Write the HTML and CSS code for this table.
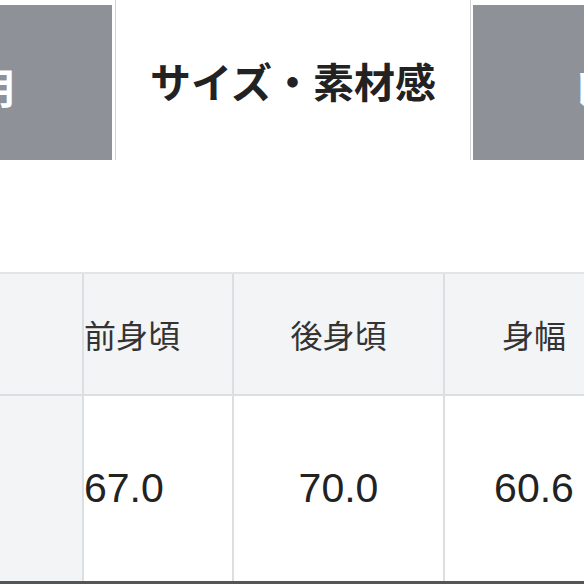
FILE: index.html
```html
<!DOCTYPE html>
<html lang="ja">
<head>
<meta charset="utf-8">
<link rel="stylesheet" href="styles.css">
</head>
<body>
<div class="page">
  <div class="tabs">
    <div class="tab tab-off tab-left">商品説明</div>
    <div class="tab tab-on">サイズ・素材感</div>
    <div class="tab tab-off tab-right">レビュー</div>
  </div>
  <div class="size-table">
    <div class="cell head first"></div>
    <div class="cell head left">前身頃</div>
    <div class="cell head">後身頃</div>
    <div class="cell head">身幅</div>
    <div class="cell data first"></div>
    <div class="cell data left num">67.0</div>
    <div class="cell data num">70.0</div>
    <div class="cell data num">60.6</div>
  </div>
</div>
</body>
</html>
```
FILE: styles.css
```css
html, body {
  margin: 0;
  padding: 0;
  background: #ffffff;
}
.page {
  width: 584px;
  height: 584px;
  overflow: hidden;
  font-family: "Noto Sans CJK JP", "Noto Sans", sans-serif;
}
.tabs {
  display: flex;
  align-items: flex-end;
  height: 160px;
  width: 1200px;
  margin-left: -248px;
}
.tab {
  flex: 0 0 auto;
  display: flex;
  align-items: center;
  justify-content: center;
  font-weight: 700;
  font-size: 41px;
  box-sizing: border-box;
  white-space: nowrap;
}
.tab-off {
  width: 360px;
  height: 155px;
  background: #8e9197;
  color: #ffffff;
  padding-top: 6px;
}
.tab-left {
  margin-right: 3px;
}
.tab-on {
  width: 356px;
  height: 170px;
  background: #ffffff;
  color: #222222;
  border-left: 1px solid #d2d4d6;
  border-right: 1px solid #d2d4d6;
  margin-right: 2px;
  padding-top: 10px;
}
.tab-right {
  width: 362px;
}
.size-table {
  margin-top: 112px;
  display: grid;
  grid-template-columns: 82px 148px 209px 178px;
  grid-template-rows: 120px 185px;
  gap: 2px;
  width: max-content;
  background: #dcdfe2;
  border-top: 2px solid #e2e4e6;
  border-bottom: 3px solid #555555;
}
.cell {
  display: flex;
  align-items: center;
  justify-content: center;
  white-space: nowrap;
  overflow: hidden;
}
.head {
  background: #f3f4f6;
  color: #333333;
  font-size: 32px;
  padding-top: 0;
  box-sizing: border-box;
}
.data {
  background: #ffffff;
}
.data.first {
  background: #f3f4f6;
}
.left {
  justify-content: flex-start;
}
.num {
  font-family: "Liberation Sans", Arial, sans-serif;
  font-size: 41px;
  color: #222222;
}
```
